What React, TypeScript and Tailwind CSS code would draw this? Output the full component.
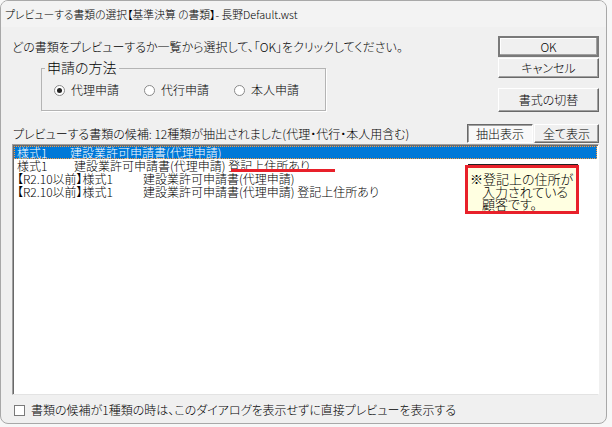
import React from 'react';

const rows = [
  { a: '様式1', b: '建設業許可申請書(代理申請)', w: 'w-[53px]', selected: true },
  { a: '様式1', b: '建設業許可申請書(代理申請) 登記上住所あり', w: 'w-[57px]' },
  { a: '【R2.10以前】様式1', b: '建設業許可申請書(代理申請)', w: 'w-[126px]' },
  { a: '【R2.10以前】様式1', b: '建設業許可申請書(代理申請) 登記上住所あり', w: 'w-[126px]' },
];

function Radio({ label, checked }: { label: string; checked?: boolean }) {
  return (
    <div className="flex items-center gap-[6px]">
      <span className="w-[11px] h-[11px] rounded-full border border-[#8a8a8a] bg-white flex items-center justify-center">
        {checked && <span className="w-[5px] h-[5px] rounded-full bg-[#222]" />}
      </span>
      <span>{label}</span>
    </div>
  );
}

function Btn({ children, main, pressed, cls }: { children: React.ReactNode; main?: boolean; pressed?: boolean; cls: string }) {
  let border = 'border border-t-white border-l-white border-r-[#696969] border-b-[#696969] shadow-[inset_-1px_-1px_0_#a0a0a0]';
  if (main) border = 'border-2 border-[#7a7a7a] shadow-[inset_-1px_-1px_0_#a0a0a0,inset_1px_1px_0_#fff]';
  if (pressed) border = 'border border-t-[#696969] border-l-[#696969] border-r-white border-b-white shadow-[inset_1px_1px_0_#a0a0a0] bg-[#f9f9f9]';
  return (
    <div className={`flex items-center justify-center ${pressed ? '' : 'bg-[#f0f0f0]'} ${border} ${cls}`}>
      {children}
    </div>
  );
}

export default function App() {
  return (
    <div className="w-[612px] h-[427px] bg-[#f7f7f7] overflow-hidden text-[12px] text-black leading-none font-light [font-family:'Noto_Sans_CJK_JP','Noto_Sans',sans-serif] [font-feature-settings:'palt']">
      <div className="w-[607px] h-[424px] rounded-[8px] border border-[#a8a8a8] bg-[#f0f0f0] flex flex-col overflow-hidden">
        {/* タイトル */}
        <div className="h-[26px] flex items-center pl-[4px] bg-[#f3f3f3] text-[10.8px]">
          プレビューする書類の選択【基準決算 の書類】- 長野Default.wst
        </div>

        {/* 上部 */}
        <div className="flex">
          <div className="flex-1 pl-[11px]">
            <div className="mt-[12px] h-[16px] flex items-center">
              どの書類をプレビューするか一覧から選択して、「OK」をクリックしてください。
            </div>
            <div className="relative mt-[13px] ml-[29px] w-[285px] h-[43px] border border-[#b4b4b4] shadow-[1px_1px_0_#fff]">
              <span className="absolute -top-[9px] left-[3px] px-[2px] bg-[#f0f0f0] text-[14px]">申請の方法</span>
              <div className="flex items-center gap-[25px] pl-[12px] mt-[15px]">
                <Radio label="代理申請" checked />
                <Radio label="代行申請" />
                <Radio label="本人申請" />
              </div>
            </div>
          </div>
          <div className="w-[101px] mr-[7px] flex flex-col">
            <Btn main cls="mt-[9px] h-[21px]">OK</Btn>
            <Btn cls="mt-[1px] h-[20px]">キャンセル</Btn>
            <Btn cls="mt-[10px] h-[24px]">書式の切替</Btn>
          </div>
        </div>

        {/* 候補ラベル */}
        <div className="flex items-center mt-[12px] h-[19px] pl-[12px] pr-[7px]">
          <span className="flex-1">プレビューする書類の候補: 12種類が抽出されました(代理・代行・本人用含む)</span>
          <Btn pressed cls="w-[66px] h-[19px]">抽出表示</Btn>
          <Btn cls="ml-[1px] w-[65px] h-[19px]">全て表示</Btn>
        </div>

        {/* リスト */}
        <div className="relative mt-[1px] ml-[11px] w-[587px] h-[251px] bg-white border border-t-[#a0a0a0] border-l-[#a0a0a0] border-r-white border-b-[#e3e3e3] shadow-[inset_1px_1px_0_#696969]">
          <div className="pt-[1px] pl-[1px] pr-[1px]">
            {rows.map((r, i) => (
              <div
                key={i}
                className={`h-[13px] flex items-center pl-[3px] whitespace-nowrap ${
                  r.selected ? 'bg-[#0078d7] text-white outline outline-1 outline-dotted outline-[#ff9a3c] -outline-offset-1' : ''
                }`}
              >
                <span className={`${r.w} shrink-0`}>{r.a}</span>
                <span>{r.b}</span>
              </div>
            ))}
          </div>

          {/* 赤い下線 */}
          <div className="absolute left-[218px] top-[24px] w-[104px] h-[3px] bg-[#e8202a]" />

          {/* 注記 */}
          <div className="absolute left-[455px] top-[19px] w-[110px] h-[1px] bg-[#222]" />
          <div className="absolute left-[452px] top-[20px] w-[114px] h-[49px] border-[3px] border-[#e8202a] bg-[#ffffe1] overflow-hidden">
            <div className="pl-[2px] pt-[5px] flex flex-col whitespace-nowrap leading-[12.5px] text-[13px]">
              <span>※登記上の住所が</span>
              <span className="pl-[12px]">入力されている</span>
              <span className="pl-[12px]">顧客です。</span>
            </div>
          </div>
        </div>

        {/* チェックボックス */}
        <div className="mt-[9px] ml-[13px] flex items-center gap-[6px] h-[12px]">
          <span className="w-[11px] h-[11px] border border-[#7a7a7a] bg-white" />
          <span>書類の候補が1種類の時は、このダイアログを表示せずに直接プレビューを表示する</span>
        </div>
      </div>
    </div>
  );
}
